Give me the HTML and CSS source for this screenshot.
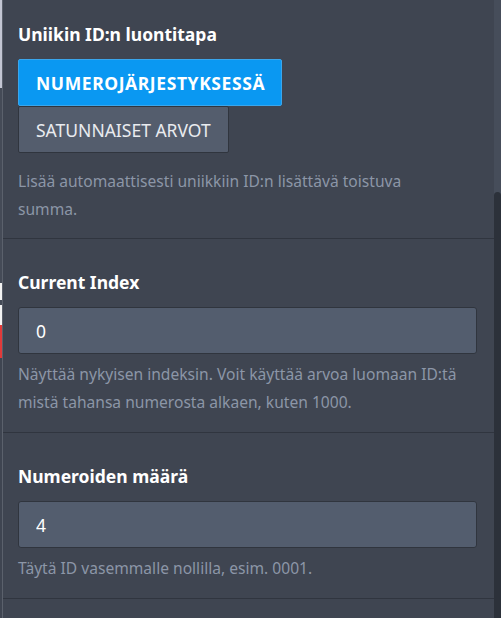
FILE: index.html
```html
<!DOCTYPE html>
<html lang="fi">
<head>
<meta charset="utf-8">
<link rel="stylesheet" href="styles.css">
</head>
<body>
<div class="app">
  <div class="backdrop"></div>
  <div class="panel">
    <section class="field first">
      <h3 class="label">Uniikin ID:n luontitapa</h3>
      <div class="options">
        <button class="opt active">NUMEROJÄRJESTYKSESSÄ</button>
        <button class="opt">SATUNNAISET ARVOT</button>
      </div>
      <p class="help top">Lisää automaattisesti uniikkiin ID:n lisättävä toistuva summa.</p>
    </section>
    <section class="field">
      <h3 class="label">Current Index</h3>
      <input class="text" type="text" value="0">
      <p class="help">Näyttää nykyisen indeksin. Voit käyttää arvoa luomaan ID:tä mistä tahansa numerosta alkaen, kuten 1000.</p>
    </section>
    <section class="field">
      <h3 class="label">Numeroiden määrä</h3>
      <input class="text" type="text" value="4">
      <p class="help">Täytä ID vasemmalle nollilla, esim. 0001.</p>
    </section>
    <section class="field last"></section>
  </div>
  <div class="scrollbar"><div class="thumb"></div></div>
</div>
</body>
</html>
```

FILE: styles.css
```css
* { box-sizing: border-box; }
html, body { margin: 0; padding: 0; }
body {
  background: #3f4551;
  font-family: "Noto Sans", "Open Sans", sans-serif;
  width: 501px;
  height: 618px;
  overflow: hidden;
}
.app {
  display: flex;
  height: 618px;
}
.backdrop {
  width: 3px;
  flex: none;
  border-right: 1px solid #5b616c;
  background: linear-gradient(to bottom,
    #c3c6d3 0, #c3c6d3 88px,
    #454b57 88px, #454b57 283px,
    #f2f2f2 283px, #f2f2f2 300px,
    #454b57 300px, #454b57 305px,
    #f2f2f2 305px, #f2f2f2 325px,
    #e23a3a 325px, #e23a3a 358px,
    #3f4551 358px, #3f4551 100%);
}
.panel {
  flex: 1;
  background: #3f4551;
  min-width: 0;
}
.field {
  padding: 33px 15px 16px;
  border-top: 1px solid #30353f;
  display: flex;
  flex-direction: column;
}
.field.first {
  border-top: 0;
  padding-top: 24px;
  padding-bottom: 15px;
}
.label {
  margin: 0 0 15px;
  font-size: 17.5px;
  line-height: 20px;
  font-weight: 700;
  color: #ffffff;
}
.options {
  display: flex;
  flex-direction: column;
  align-items: flex-start;
}
.opt {
  font-family: inherit;
  font-size: 17.5px;
  height: 47px;
  padding: 0 17px;
  margin: 0;
  border: 1px solid #30353e;
  background: #545d6d;
  color: #e9ebef;
  border-radius: 2px;
  font-weight: 400;
}
.opt.active {
  background: #0a98f2;
  border-color: #3aa6ec;
  color: #ffffff;
  font-weight: 700;
  letter-spacing: 0.6px;
  padding: 0 16px 0 17px;
}
.text {
  font-family: inherit;
  font-size: 17.5px;
  height: 47px;
  width: 459px;
  padding: 0 17px;
  margin: 0;
  background: #535d6e;
  border: 1px solid #30353e;
  border-radius: 3px;
  color: #ffffff;
  outline: none;
}
.help {
  margin: 6px 0 0;
  font-size: 15.6px;
  line-height: 28px;
  color: #8c96a7;
}
.help.top {
  margin-top: 14px;
  max-width: 430px;
}
.field.last { height: 40px; padding: 0; }
.scrollbar {
  width: 7px;
  flex: none;
  background: #464d5a;
  position: relative;
}
.thumb {
  position: absolute;
  left: 0;
  right: 0;
  top: 192px;
  bottom: 0;
  background: #2c313a;
  border-radius: 4px 4px 0 0;
}
```
